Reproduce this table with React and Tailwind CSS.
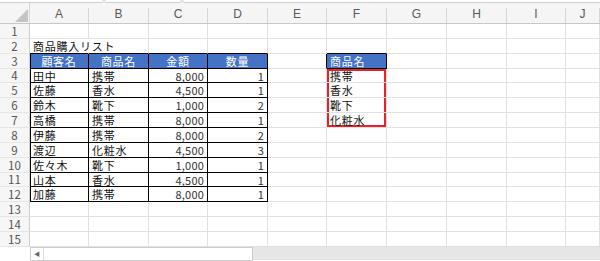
import React from 'react';

const FONT = '"Noto Sans CJK JP", "Noto Sans", sans-serif';

// column widths for A..J (J takes the rest)
const COLS = [
  { key: 'A', w: 'w-[59px]' },
  { key: 'B', w: 'w-[60px]' },
  { key: 'C', w: 'w-[59px]' },
  { key: 'D', w: 'w-[60px]' },
  { key: 'E', w: 'w-[59px]' },
  { key: 'F', w: 'w-[60px]' },
  { key: 'G', w: 'w-[60px]' },
  { key: 'H', w: 'w-[60px]' },
  { key: 'I', w: 'w-[59px]' },
  { key: 'J', w: 'flex-1' },
];

const ROW_H = {
  4: 'h-[14px]',
  11: 'h-[14px]',
};

const orders = [
  ['田中', '携帯', '8,000', '1'],
  ['佐藤', '香水', '4,500', '1'],
  ['鈴木', '靴下', '1,000', '2'],
  ['高橋', '携帯', '8,000', '1'],
  ['伊藤', '携帯', '8,000', '2'],
  ['渡辺', '化粧水', '4,500', '3'],
  ['佐々木', '靴下', '1,000', '1'],
  ['山本', '香水', '4,500', '1'],
  ['加藤', '携帯', '8,000', '1'],
];

const products = ['携帯', '香水', '靴下', '化粧水'];

// what sits in each cell: { text, align, head }
function cellData(r, c) {
  if (r === 2 && c === 0) return { text: '商品購入リスト', overflow: true };
  if (r === 3 && c <= 3) return { text: ['顧客名', '商品名', '金額', '数量'][c], head: true, align: 'center' };
  if (r === 3 && c === 5) return { text: '商品名', head: true };
  if (r >= 4 && r <= 12 && c <= 3) {
    const v = orders[r - 4][c];
    return { text: v, align: c >= 2 ? 'right' : 'left', num: c >= 2 };
  }
  if (r >= 4 && r <= 7 && c === 5) return { text: products[r - 4] };
  return null;
}

function borderClasses(r, c) {
  const inTable = r >= 3 && r <= 12 && c <= 3;
  const classes = [];
  // right edge
  if (inTable || (r === 3 && (c === 4 || c === 5))) classes.push('border-r border-r-black');
  else if (r === 2 && c === 0) classes.push('border-r border-r-transparent');
  else classes.push('border-r border-r-[#e1e1e1]');
  // bottom edge
  if ((r >= 2 && r <= 12 && c <= 3) || ((r === 2 || r === 3) && c === 5)) classes.push('border-b border-b-black');
  else classes.push('border-b border-b-[#e1e1e1]');
  if (inTable && c === 0) classes.push('shadow-[inset_1px_0_0_#000]');
  // red frame round F4:F7
  if (c === 5 && r === 4) classes.push('shadow-[inset_2px_0_0_#e8202a,inset_-2px_0_0_#e8202a,inset_0_2px_0_#e8202a]');
  if (c === 5 && (r === 5 || r === 6)) classes.push('shadow-[inset_2px_0_0_#e8202a,inset_-2px_0_0_#e8202a]');
  if (c === 5 && r === 7) classes.push('shadow-[inset_2px_0_0_#e8202a,inset_-2px_0_0_#e8202a,inset_0_-2px_0_#e8202a]');
  return classes.join(' ');
}

function Cell({ r, c, w }) {
  const d = cellData(r, c);
  const align =
    d && d.align === 'center' ? 'justify-center' : d && d.align === 'right' ? 'justify-end pr-[3px]' : 'justify-start pl-[3px]';
  const bg = d && d.head ? 'bg-[#4472c4] text-white' : 'bg-white text-[#111]';
  return (
    <div className={`${w} shrink-0 h-full flex items-center ${align} ${bg} ${borderClasses(r, c)} ${d && d.overflow ? 'relative z-10' : ''}`}>
      {d && (
        <span
          className={`whitespace-nowrap text-[11px] leading-[12px] ${d.num ? 'tracking-[0.2px] text-[#333]' : 'tracking-[0.75px]'}`}
        >
          {d.text}
        </span>
      )}
    </div>
  );
}

function SheetRow({ r }) {
  const h = ROW_H[r] || 'h-[15px]';
  return (
    <div className={`flex ${h}`}>
      <div className="w-[30px] shrink-0 h-full flex items-center justify-center bg-[#f6f6f6] border-r border-r-[#cfcfcf] border-b border-b-[#e6e6e6] text-[11.5px] leading-[11px] text-[#555]">
        {r}
      </div>
      {COLS.map((col, c) => (
        <Cell key={col.key} r={r} c={c} w={col.w} />
      ))}
    </div>
  );
}

export default function App() {
  const rows = Array.from({ length: 15 }, (_, i) => i + 1);
  return (
    <div className="w-[600px] h-[261px] overflow-hidden bg-white flex flex-col" style={{ fontFamily: FONT }}>
      {/* formula bar edge */}
      <div className="h-[3px] flex gap-[4px] bg-[#e6e6e6]">
        <div className="w-[102px] bg-white border-b border-[#cfcfcf]" />
        <div className="w-[74px] bg-white border-b border-[#cfcfcf]" />
        <div className="flex-1 bg-white border-b border-[#cfcfcf]" />
      </div>

      {/* column letters */}
      <div className="flex h-[21px] bg-[#f5f5f5] border-b border-b-[#c8c8c8]">
        <div className="w-[30px] shrink-0 relative border-r border-r-[#d6d6d6]">
          <svg className="absolute left-[15px] top-[6px]" width="13" height="13" viewBox="0 0 13 13">
            <polygon points="13,0 13,13 0,13" fill="#c4c4c4" />
          </svg>
        </div>
        {COLS.map((col) => (
          <div key={col.key} className={`${col.w} shrink-0 flex items-end`}>
            <span className="flex-1 text-center text-[12px] leading-[18px] text-[#5a5a5a]" style={{ fontFamily: '"Liberation Sans", sans-serif' }}>
              {col.key}
            </span>
            <div className="w-px h-[15px] bg-[#d6d6d6]" />
          </div>
        ))}
      </div>

      {rows.map((r) => (
        <SheetRow key={r} r={r} />
      ))}

      {/* horizontal scroll bar */}
      <div className="flex h-[14px]">
        <div className="w-[30px] shrink-0 bg-white" />
        <div className="w-[223px] shrink-0 flex bg-white border border-[#cdcdcd]">
          <div className="w-[13px] flex items-center justify-center border-r border-[#dcdcdc] text-[6px] leading-none text-[#666]">◀</div>
        </div>
        <div className="flex-1 bg-[#e6e6e6] mb-[1px]" />
      </div>
    </div>
  );
}
